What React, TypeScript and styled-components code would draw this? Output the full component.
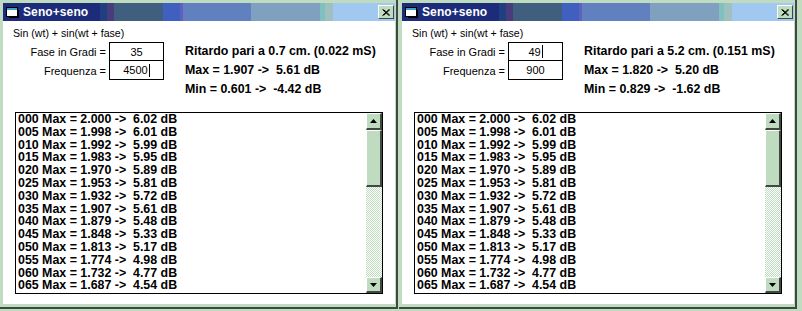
import React from "react";
import styled, { createGlobalStyle } from "styled-components";

const FACE = "#c0dcc0";
const DARK = "#404840";

const GlobalStyle = createGlobalStyle`
  html, body { margin: 0; padding: 0; background: ${FACE}; }
  body { font-family: "Liberation Sans", Arial, sans-serif; color: #000; }
`;

const Desktop = styled.div`
  display: flex;
  gap: 1px;
  width: 802px;
  height: 311px;
  overflow: hidden;
`;

const Window = styled.div`
  width: 398px;
  height: 309px;
  box-sizing: border-box;
  background: ${FACE};
  padding: 3px 1px 3px 3px;
  border-right: 2px solid ${DARK};
  border-bottom: 2px solid ${DARK};
  display: flex;
  flex-direction: column;
`;

const TitleBar = styled.div`
  height: 18px;
  flex: none;
  display: flex;
  align-items: center;
  gap: 2px;
  padding-left: 2px;
  padding-right: 1px;
  background: linear-gradient(
    to right,
    #1c2c7a 0px, #1c2c7a 97px,
    #203f80 97px, #203f80 104px,
    #483c7c 104px, #483c7c 111px,
    #405f7f 111px, #405f7f 160px,
    #4060c0 160px, #4060c0 177px,
    #6060c0 177px, #6060c0 180px,
    #6080c0 180px, #6080c0 248px,
    #80a0c0 248px, #80a0c0 317px,
    #80c0c0 317px, #80c0c0 322px,
    #a0c0c0 322px, #a0c0c0 330px,
    #a0c8f0 330px, #a0c8f0 100%
  );
`;

const TitleText = styled.span`
  flex: 1;
  color: #fff;
  font-weight: bold;
  font-size: 12px;
  line-height: 18px;
  letter-spacing: 0.1px;
`;

const CloseButton = styled.div`
  width: 16px;
  height: 14px;
  box-sizing: border-box;
  background: ${FACE};
  border-style: solid;
  border-width: 1px;
  border-color: #fff ${DARK} ${DARK} #fff;
  display: flex;
  align-items: center;
  justify-content: center;
`;

const Content = styled.div`
  flex: 1;
  background: #fff;
  padding: 5px 0 0 10px;
  display: flex;
  flex-direction: column;
`;

const Caption = styled.div`
  font-size: 10.6px;
  line-height: 14px;
  height: 14px;
  white-space: pre;
`;

const FormArea = styled.div`
  margin-top: 2px;
  display: flex;
  align-items: flex-start;
`;

const FieldGrid = styled.div`
  display: grid;
  grid-template-columns: 93px 55px;
  grid-auto-rows: 19px;
  column-gap: 3px;
  align-items: center;
`;

const Label = styled.div`
  text-align: right;
  font-size: 11px;
  white-space: pre;
`;

const Field = styled.div<{ $joined?: boolean }>`
  height: 19px;
  box-sizing: border-box;
  border: 1px solid #000;
  border-top-width: ${(p) => (p.$joined ? 0 : 1)}px;
  display: flex;
  align-items: center;
  justify-content: center;
  font-size: 11px;
`;

const Caret = styled.span`
  display: inline-block;
  width: 1px;
  height: 13px;
  background: #000;
  margin-left: 1px;
`;

const Results = styled.div`
  margin-left: 21px;
  font-weight: bold;
  font-size: 12.4px;
  line-height: 19px;
  white-space: pre;
`;

const ListBox = styled.div`
  margin: 13px 0 0 2px;
  width: 368px;
  height: 182px;
  box-sizing: border-box;
  border: 1px solid #000;
  display: flex;
  background: #fff;
`;

const Rows = styled.div`
  flex: 1;
  overflow: hidden;
  padding-left: 2px;
`;

const Row = styled.div`
  height: 12.8px;
  line-height: 12.8px;
  font-weight: bold;
  font-size: 12.4px;
  white-space: pre;
`;

const ScrollBar = styled.div`
  width: 16px;
  display: flex;
  flex-direction: column;
`;

const ScrollButton = styled.div<{ $h: number }>`
  height: ${(p) => p.$h}px;
  flex: none;
  box-sizing: border-box;
  background: ${FACE};
  border-style: solid;
  border-width: 1px 2px 2px 1px;
  border-color: #fff ${DARK} ${DARK} #fff;
  display: flex;
  align-items: center;
  justify-content: center;
`;

const Track = styled.div`
  flex: 1;
  background: repeating-conic-gradient(${FACE} 0 25%, #fff 0 50%) 0 0 / 2px 2px;
`;

const rows: [string, string, string][] = [
  ["000", "2.000", "6.02"],
  ["005", "1.998", "6.01"],
  ["010", "1.992", "5.99"],
  ["015", "1.983", "5.95"],
  ["020", "1.970", "5.89"],
  ["025", "1.953", "5.81"],
  ["030", "1.932", "5.72"],
  ["035", "1.907", "5.61"],
  ["040", "1.879", "5.48"],
  ["045", "1.848", "5.33"],
  ["050", "1.813", "5.17"],
  ["055", "1.774", "4.98"],
  ["060", "1.732", "4.77"],
  ["065", "1.687", "4.54"],
];

const AppIcon = () => (
  <svg width="16" height="14" viewBox="0 0 16 14">
    <rect x="1.5" y="2.5" width="11" height="9" fill="#fff" stroke="#000" />
    <rect x="2" y="3" width="10" height="2" fill="#40a0c0" />
    <rect x="13" y="5" width="1" height="7" fill="#000" />
    <rect x="4" y="12" width="10" height="1" fill="#000" />
  </svg>
);

const CloseIcon = () => (
  <svg width="8" height="7" viewBox="0 0 8 7">
    <path d="M0.5 0.5 L7 6.5 M1.5 0.5 L8 6.5 M7 0.5 L0.5 6.5 M8 0.5 L1.5 6.5" stroke="#000" strokeWidth="1" />
  </svg>
);

const UpArrow = () => (
  <svg width="7" height="4" viewBox="0 0 7 4">
    <path d="M3.5 0 L7 4 L0 4 Z" fill="#000" />
  </svg>
);

const DownArrow = () => (
  <svg width="7" height="4" viewBox="0 0 7 4">
    <path d="M0 0 L7 0 L3.5 4 Z" fill="#000" />
  </svg>
);

type WinProps = {
  fase: string;
  freq: string;
  caretOn: "fase" | "freq";
  ritardo: string;
  max: string;
  min: string;
};

const SenoWindow = ({ fase, freq, caretOn, ritardo, max, min }: WinProps) => (
  <Window>
    <TitleBar>
      <AppIcon />
      <TitleText>Seno+seno</TitleText>
      <CloseButton>
        <CloseIcon />
      </CloseButton>
    </TitleBar>
    <Content>
      <Caption>Sin (wt) + sin(wt + fase)</Caption>
      <FormArea>
        <FieldGrid>
          <Label>Fase in Gradi =</Label>
          <Field>
            {fase}
            {caretOn === "fase" && <Caret />}
          </Field>
          <Label>Frequenza =</Label>
          <Field $joined>
            {freq}
            {caretOn === "freq" && <Caret />}
          </Field>
        </FieldGrid>
        <Results>
          <div>{ritardo}</div>
          <div>{max}</div>
          <div>{min}</div>
        </Results>
      </FormArea>
      <ListBox>
        <Rows>
          {rows.map(([a, b, c]) => (
            <Row key={a}>{`${a} Max = ${b} ->  ${c} dB`}</Row>
          ))}
        </Rows>
        <ScrollBar>
          <ScrollButton $h={17}>
            <UpArrow />
          </ScrollButton>
          <ScrollButton $h={57} />
          <Track />
          <ScrollButton $h={16}>
            <DownArrow />
          </ScrollButton>
        </ScrollBar>
      </ListBox>
    </Content>
  </Window>
);

export default function App() {
  return (
    <>
      <GlobalStyle />
      <Desktop>
        <SenoWindow
          fase="35"
          freq="4500"
          caretOn="freq"
          ritardo="Ritardo pari a 0.7 cm. (0.022 mS)"
          max="Max = 1.907 ->  5.61 dB"
          min="Min = 0.601 ->  -4.42 dB"
        />
        <SenoWindow
          fase="49"
          freq="900"
          caretOn="fase"
          ritardo="Ritardo pari a 5.2 cm. (0.151 mS)"
          max="Max = 1.820 ->  5.20 dB"
          min="Min = 0.829 ->  -1.62 dB"
        />
      </Desktop>
    </>
  );
}
